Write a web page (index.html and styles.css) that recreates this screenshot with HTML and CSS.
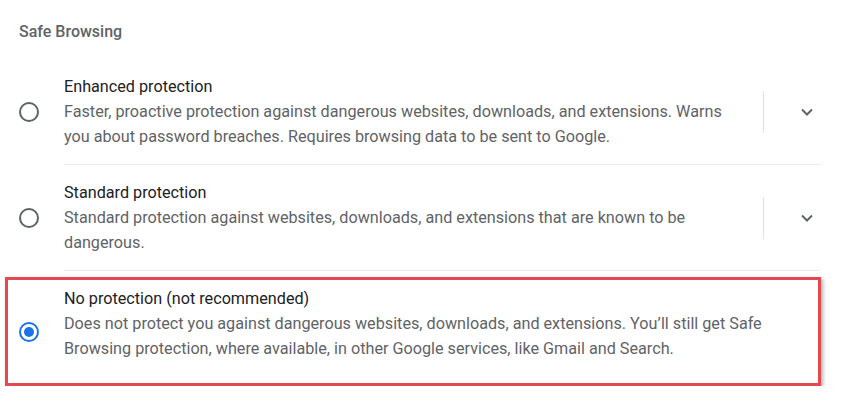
FILE: index.html
```html
<!DOCTYPE html>
<html lang="en">
<head>
    <meta charset="UTF-8">
    <meta name="viewport" content="width=device-width, initial-scale=1.0">
    <title>Safe Browsing</title>
    <link rel="stylesheet" href="styles.css">
</head>
<body>
    <div class="page">
        <h2 class="section-title">Safe Browsing</h2>

        <div class="option">
            <span class="radio"></span>
            <div class="option-main">
                <div class="option-text">
                    <div class="option-label">Enhanced protection</div>
                    <div class="option-desc">Faster, proactive protection against dangerous websites, downloads, and extensions. Warns you about password breaches. Requires browsing data to be sent to Google.</div>
                </div>
                <span class="divider"></span>
                <button class="expand">
                    <svg width="12" height="8" viewBox="0 0 12 8"><path d="M1 1.5l5 5 5-5" fill="none" stroke="#5f6368" stroke-width="2"/></svg>
                </button>
            </div>
        </div>

        <div class="option">
            <span class="radio"></span>
            <div class="option-main">
                <div class="option-text">
                    <div class="option-label">Standard protection</div>
                    <div class="option-desc">Standard protection against websites, downloads, and extensions that are known to be dangerous.</div>
                </div>
                <span class="divider"></span>
                <button class="expand">
                    <svg width="12" height="8" viewBox="0 0 12 8"><path d="M1 1.5l5 5 5-5" fill="none" stroke="#5f6368" stroke-width="2"/></svg>
                </button>
            </div>
        </div>

        <div class="highlight">
            <div class="option">
                <span class="radio checked"></span>
                <div class="option-main">
                    <div class="option-text">
                        <div class="option-label">No protection (not recommended)</div>
                        <div class="option-desc">Does not protect you against dangerous websites, downloads, and extensions. You’ll still get Safe Browsing protection, where available, in other Google services, like Gmail and Search.</div>
                    </div>
                </div>
            </div>
        </div>
    </div>
</body>
</html>
```

FILE: styles.css
```css
body {
    margin: 0;
    background: #fff;
    font-family: Roboto, "Liberation Sans", sans-serif;
    font-size: 16.2px;
    line-height: 25px;
    color: #202124;
}
.page {
    padding: 19px 24px 0 19px;
}
.section-title {
    margin: 0 0 15px;
    font-size: 16px;
    font-weight: 500;
    line-height: 25px;
    color: #5f6368;
}
.option {
    display: flex;
    align-items: center;
}
.radio {
    flex: none;
    width: 20px;
    height: 20px;
    box-sizing: border-box;
    border: 2px solid #5f6368;
    border-radius: 50%;
    margin-right: 25px;
    display: flex;
    align-items: center;
    justify-content: center;
}
.radio.checked {
    border-color: #1a73e8;
}
.radio.checked::after {
    content: "";
    width: 10px;
    height: 10px;
    border-radius: 50%;
    background: #1a73e8;
}
.option-main {
    flex: 1;
    display: flex;
    align-items: center;
    padding: 15px 0;
    border-bottom: 1px solid #e8eaed;
}
.option-text {
    flex: 1;
}
.option-desc {
    color: #5f6368;
}
.divider {
    flex: none;
    width: 1px;
    height: 42px;
    background: #e0e0e0;
    margin-left: 20px;
}
.expand {
    flex: none;
    width: 56px;
    height: 40px;
    padding: 0 7px 0 0;
    border: none;
    background: none;
    display: flex;
    align-items: center;
    justify-content: flex-end;
}
.highlight {
    margin: 6px -1px 0 -14px;
    padding: 0 10px 0 11px;
    border: 3px solid #e5484d;
    box-shadow: 2px 2px 4px rgba(0, 0, 0, 0.3);
}
.highlight .option-main {
    padding: 6px 0 22px;
    border-bottom: none;
}
```
